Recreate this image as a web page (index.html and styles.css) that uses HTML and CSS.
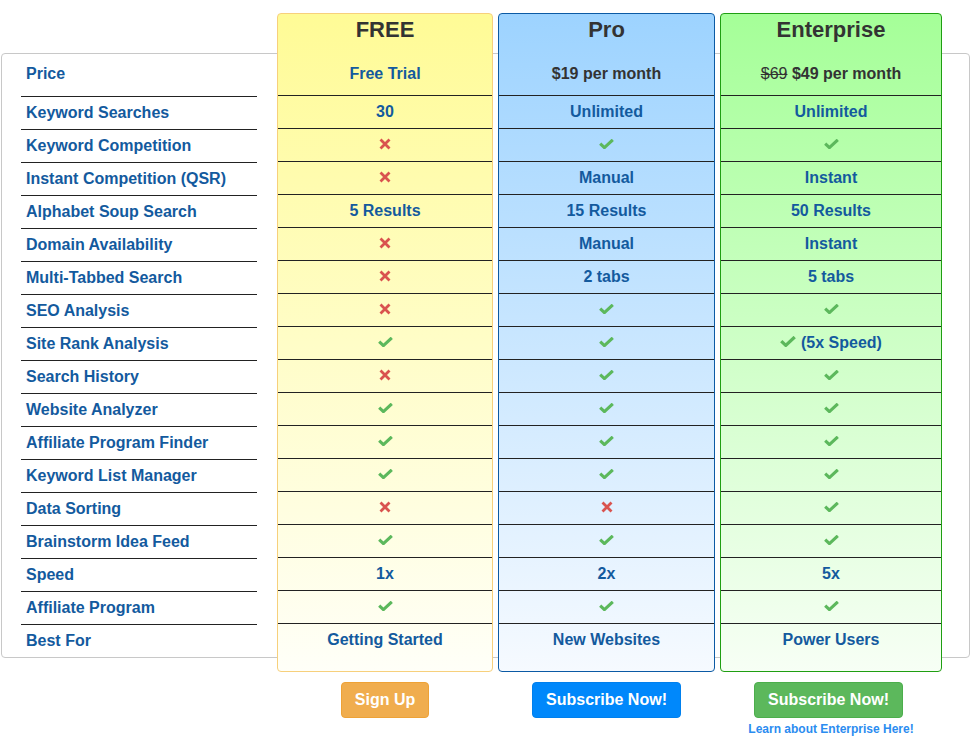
FILE: index.html
```html
<!DOCTYPE html>
<html lang="en">
<head>
<meta charset="utf-8">
<title>Pricing</title>
<link rel="stylesheet" href="styles.css">
</head>
<body>
<svg class="defs" aria-hidden="true">
  <symbol id="check" viewBox="0 0 15 10"><polyline points="1.2,4.6 5.4,8.6 13.8,0.8" fill="none" stroke="currentColor" stroke-width="3.1" stroke-linejoin="miter"/></symbol>
  <symbol id="cross" viewBox="0 0 12 12"><path d="M1.5 1.5 L10.5 10.5 M10.5 1.5 L1.5 10.5" fill="none" stroke="currentColor" stroke-width="2.8"/></symbol>
</svg>
<div class="page">
  <div class="grid">
    <div class="labels">
      <div class="label label-price">Price</div>
      <div class="label">Keyword Searches</div>
      <div class="label">Keyword Competition</div>
      <div class="label">Instant Competition (QSR)</div>
      <div class="label">Alphabet Soup Search</div>
      <div class="label">Domain Availability</div>
      <div class="label">Multi-Tabbed Search</div>
      <div class="label">SEO Analysis</div>
      <div class="label">Site Rank Analysis</div>
      <div class="label">Search History</div>
      <div class="label">Website Analyzer</div>
      <div class="label">Affiliate Program Finder</div>
      <div class="label">Keyword List Manager</div>
      <div class="label">Data Sorting</div>
      <div class="label">Brainstorm Idea Feed</div>
      <div class="label">Speed</div>
      <div class="label">Affiliate Program</div>
      <div class="label label-last">Best For</div>
    </div>

    <div class="plan plan-free">
      <div class="plan-head">
        <div class="plan-title">FREE</div>
        <div class="plan-price">Free Trial</div>
      </div>
      <div class="cell">30</div>
      <div class="cell"><svg class="ic ic-x"><use href="#cross"/></svg></div>
      <div class="cell"><svg class="ic ic-x"><use href="#cross"/></svg></div>
      <div class="cell">5 Results</div>
      <div class="cell"><svg class="ic ic-x"><use href="#cross"/></svg></div>
      <div class="cell"><svg class="ic ic-x"><use href="#cross"/></svg></div>
      <div class="cell"><svg class="ic ic-x"><use href="#cross"/></svg></div>
      <div class="cell"><svg class="ic ic-ok"><use href="#check"/></svg></div>
      <div class="cell"><svg class="ic ic-x"><use href="#cross"/></svg></div>
      <div class="cell"><svg class="ic ic-ok"><use href="#check"/></svg></div>
      <div class="cell"><svg class="ic ic-ok"><use href="#check"/></svg></div>
      <div class="cell"><svg class="ic ic-ok"><use href="#check"/></svg></div>
      <div class="cell"><svg class="ic ic-x"><use href="#cross"/></svg></div>
      <div class="cell"><svg class="ic ic-ok"><use href="#check"/></svg></div>
      <div class="cell">1x</div>
      <div class="cell"><svg class="ic ic-ok"><use href="#check"/></svg></div>
      <div class="cell cell-last">Getting Started</div>
    </div>

    <div class="plan plan-pro">
      <div class="plan-head">
        <div class="plan-title">Pro</div>
        <div class="plan-price plan-price-dark">$19 per month</div>
      </div>
      <div class="cell">Unlimited</div>
      <div class="cell"><svg class="ic ic-ok"><use href="#check"/></svg></div>
      <div class="cell">Manual</div>
      <div class="cell">15 Results</div>
      <div class="cell">Manual</div>
      <div class="cell">2 tabs</div>
      <div class="cell"><svg class="ic ic-ok"><use href="#check"/></svg></div>
      <div class="cell"><svg class="ic ic-ok"><use href="#check"/></svg></div>
      <div class="cell"><svg class="ic ic-ok"><use href="#check"/></svg></div>
      <div class="cell"><svg class="ic ic-ok"><use href="#check"/></svg></div>
      <div class="cell"><svg class="ic ic-ok"><use href="#check"/></svg></div>
      <div class="cell"><svg class="ic ic-ok"><use href="#check"/></svg></div>
      <div class="cell"><svg class="ic ic-x"><use href="#cross"/></svg></div>
      <div class="cell"><svg class="ic ic-ok"><use href="#check"/></svg></div>
      <div class="cell">2x</div>
      <div class="cell"><svg class="ic ic-ok"><use href="#check"/></svg></div>
      <div class="cell cell-last">New Websites</div>
    </div>

    <div class="plan plan-ent">
      <div class="plan-head">
        <div class="plan-title">Enterprise</div>
        <div class="plan-price plan-price-dark"><s class="old">$69</s> $49 per month</div>
      </div>
      <div class="cell">Unlimited</div>
      <div class="cell"><svg class="ic ic-ok"><use href="#check"/></svg></div>
      <div class="cell">Instant</div>
      <div class="cell">50 Results</div>
      <div class="cell">Instant</div>
      <div class="cell">5 tabs</div>
      <div class="cell"><svg class="ic ic-ok"><use href="#check"/></svg></div>
      <div class="cell"><svg class="ic ic-ok ic-lead"><use href="#check"/></svg>(5x Speed)</div>
      <div class="cell"><svg class="ic ic-ok"><use href="#check"/></svg></div>
      <div class="cell"><svg class="ic ic-ok"><use href="#check"/></svg></div>
      <div class="cell"><svg class="ic ic-ok"><use href="#check"/></svg></div>
      <div class="cell"><svg class="ic ic-ok"><use href="#check"/></svg></div>
      <div class="cell"><svg class="ic ic-ok"><use href="#check"/></svg></div>
      <div class="cell"><svg class="ic ic-ok"><use href="#check"/></svg></div>
      <div class="cell">5x</div>
      <div class="cell"><svg class="ic ic-ok"><use href="#check"/></svg></div>
      <div class="cell cell-last">Power Users</div>
    </div>
  </div>

  <div class="actions">
    <div class="action action-free"><a class="btn btn-orange" href="#">Sign Up</a></div>
    <div class="action action-pro"><a class="btn btn-blue" href="#">Subscribe Now!</a></div>
    <div class="action action-ent">
      <a class="btn btn-green" href="#">Subscribe Now!</a>
      <a class="learn" href="#">Learn about Enterprise Here!</a>
    </div>
  </div>
</div>
</body>
</html>
```
FILE: styles.css
```css
html, body {
  margin: 0;
  padding: 0;
  background: #fff;
}

body {
  font-family: "Liberation Sans", Arial, sans-serif;
  color: #135a9e;
}

.defs {
  width: 0;
  height: 0;
  overflow: hidden;
  display: block;
}

.page {
  padding-top: 53px;
}

.grid {
  display: flex;
  align-items: flex-start;
  margin-left: 1px;
  width: 969px;
  box-sizing: border-box;
  border: 1px solid #c8c8c8;
  border-radius: 4px;
}

.labels {
  width: 236px;
  margin-left: 19px;
  margin-right: 20px;
  flex: none;
}

.label {
  padding-left: 5px;
  font-size: 16px;
  font-weight: bold;
  line-height: 32px;
  border-bottom: 1px solid #222;
  white-space: nowrap;
}

.label-price {
  padding-top: 10px;
  padding-bottom: 12px;
  line-height: 20px;
}

.label-last {
  border-bottom: none;
}

.plan {
  flex: none;
  box-sizing: border-box;
  margin: -41px 0 -15px;
  border: 1px solid;
  border-radius: 4px;
  text-align: center;
  font-size: 16px;
  font-weight: bold;
}

.plan + .plan {
  margin-left: 5px;
}

.plan-free {
  width: 216px;
  border-color: #f7d07c;
  background: linear-gradient(#fffb96, #fffff8);
}

.plan-pro {
  width: 217px;
  border-color: #0b5aa4;
  background: linear-gradient(#9dd3ff, #f6faff);
}

.plan-ent {
  width: 222px;
  border-color: #1f9e12;
  background: linear-gradient(#a5ff98, #f7fff5);
}

.plan-head {
  padding: 4px 0 11px;
  border-bottom: 1px solid #222;
}

.plan-title {
  font-size: 22px;
  line-height: 24px;
  color: #333;
}

.plan-price {
  margin-top: 22px;
  line-height: 20px;
}

.plan-price-dark {
  color: #333;
}

.old {
  font-weight: normal;
  color: #333;
}

.cell {
  line-height: 32px;
  height: 32px;
  border-bottom: 1px solid #222;
  white-space: nowrap;
}

.cell-last {
  border-bottom: none;
  height: 47px;
}

.ic {
  display: inline-block;
  vertical-align: middle;
  position: relative;
  top: -2px;
}

.ic-ok {
  width: 15px;
  height: 10px;
  color: #5cb85c;
}

.ic-x {
  width: 12px;
  height: 12px;
  color: #d9534f;
}

.ic-lead {
  width: 16px;
  height: 11px;
  margin-right: 5px;
}

.actions {
  display: flex;
  margin-left: 277px;
  padding-top: 24px;
}

.action {
  display: flex;
  flex-direction: column;
  align-items: center;
  flex: none;
}

.action + .action {
  margin-left: 5px;
}

.action-free { width: 216px; }
.action-pro { width: 217px; }
.action-ent { width: 222px; }

.btn {
  display: block;
  box-sizing: border-box;
  height: 36px;
  line-height: 34px;
  padding: 0 13px;
  border: 1px solid;
  border-radius: 4px;
  color: #fff;
  font-size: 16px;
  font-weight: bold;
  text-decoration: none;
  white-space: nowrap;
}

.btn-orange {
  background: #f0ad4e;
  border-color: #eea236;
}

.btn-blue {
  background: #0088fb;
  border-color: #0080ee;
}

.btn-green {
  background: #5cb85c;
  border-color: #4cae4c;
  margin-right: 5px;
}

.learn {
  margin-top: 4px;
  font-size: 12px;
  line-height: 14px;
  font-weight: bold;
  color: #2b8cf0;
  text-decoration: none;
}
```
